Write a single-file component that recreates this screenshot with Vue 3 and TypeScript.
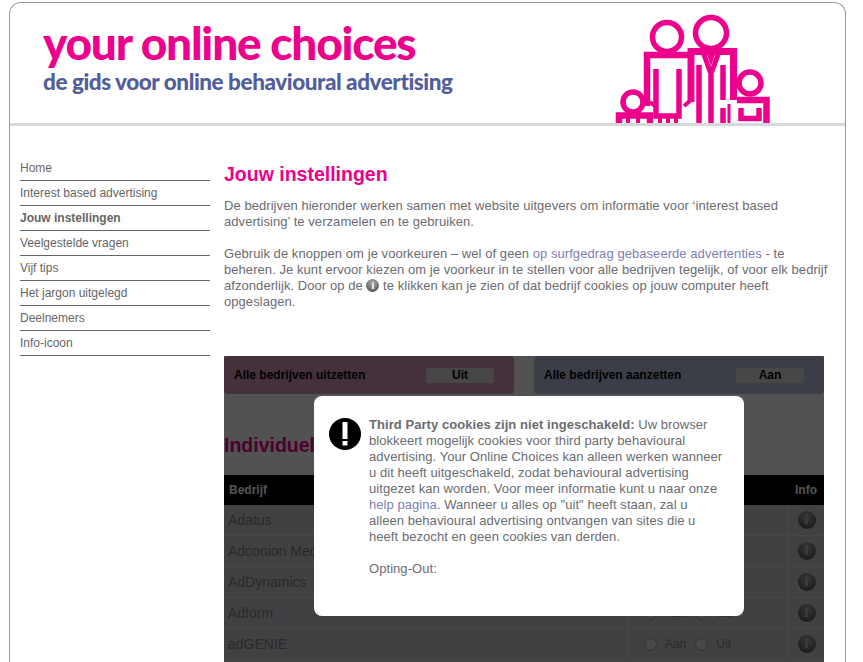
<script setup lang="ts">
interface Row {
  name: string
}

const NAV = [
  'Home',
  'Interest based advertising',
  'Jouw instellingen',
  'Veelgestelde vragen',
  'Vijf tips',
  'Het jargon uitgelegd',
  'Deelnemers',
  'Info-icoon'
]

const ROWS: Row[] = [
  { name: 'Adatus' },
  { name: 'Adconion Media Group' },
  { name: 'AdDynamics' },
  { name: 'Adform' },
  { name: 'adGENIE' }
]
</script>

<template>
  <div class="page">
    <header class="head">
      <div class="brand">
        <div class="brand-main">your online choices</div>
        <div class="brand-sub">de gids voor online behavioural advertising</div>
      </div>
      <!-- viewBox uses page pixels so the shapes can be read straight off the screenshot -->
      <svg class="people" width="180" height="123" viewBox="600 3 180 123" fill="none" stroke="#ec008c" stroke-width="5.5">
        <circle cx="667" cy="37" r="14.5" />
        <circle cx="711" cy="33" r="15.5" />
        <circle cx="750" cy="83" r="11" />
        <circle cx="633" cy="102" r="10" />
        <!-- woman -->
        <path d="M647 106V55H690" stroke-width="6.5" />
        <path d="M656 69V116H679V69" />
        <path d="M650 102L655 106M684 106L690 101M660 116V123M668 116V123M676 116V123" stroke-width="4" />
        <!-- man -->
        <path d="M691 102V51.500H733.500V100" stroke-width="7" />
        <path d="M699 65V123M723 65V100M723 108V123M711 75V123" />
        <path d="M703 52L711 74L719 52" stroke-width="5" />
        <path d="M706 52H716L711 66Z" fill="#ec008c" stroke="none" />
        <path d="M729 104V123" stroke-width="3" />
        <!-- right child -->
        <path d="M737 100H766.500V123" stroke-width="6.500" />
        <path d="M741 108V118.500H759V108" />
        <!-- left child -->
        <path d="M619 123V115.500H650V123" stroke-width="6.500" />
        <path d="M628 118V123M638 118V123" stroke-width="4" />
      </svg>
    </header>

    <div class="body">
      <nav class="nav">
        <a v-for="item in NAV" :key="item" class="nav-item" :class="{ active: item === 'Jouw instellingen' }">{{ item }}</a>
      </nav>

      <main class="main">
        <h1 class="title">Jouw instellingen</h1>
        <p class="para">De bedrijven hieronder werken samen met website uitgevers om informatie voor ‘interest based advertising’ te verzamelen en te gebruiken.</p>
        <p class="para">
          Gebruik de knoppen om je voorkeuren – wel of geen
          <a class="link">op surfgedrag gebaseerde advertenties</a> - te beheren. Je kunt ervoor kiezen om je voorkeur in te stellen voor alle bedrijven tegelijk, of voor elk bedrijf afzonderlijk. Door op de
          <span class="info small"><i>i</i></span>
          te klikken kan je zien of dat bedrijf cookies op jouw computer heeft opgeslagen.
        </p>

        <section class="settings">
          <div class="all-row">
            <div class="all-box off">
              <strong>Alle bedrijven uitzetten</strong>
              <span class="all-btn">Uit</span>
            </div>
            <div class="all-box on">
              <strong>Alle bedrijven aanzetten</strong>
              <span class="all-btn">Aan</span>
            </div>
          </div>

          <h2 class="sub-title">Individuele bedrijven</h2>

          <div class="table">
            <div class="t-head">
              <span class="c-name">Bedrijf</span>
              <span class="c-radio"></span>
              <span class="c-info">Info</span>
            </div>
            <div v-for="row in ROWS" :key="row.name" class="t-row">
              <span class="c-name">{{ row.name }}</span>
              <span class="c-radio">
                <label class="radio-label"><span class="radio"></span>Aan</label>
                <label class="radio-label"><span class="radio"></span>Uit</label>
              </span>
              <span class="c-info"><span class="info"><i>i</i></span></span>
            </div>
          </div>

          <div class="veil"></div>

          <div class="modal">
            <svg class="alert" width="32" height="32" viewBox="0 0 32 32">
              <circle cx="16" cy="16" r="16" fill="#000" />
              <rect x="13.500" y="4" width="5" height="17" fill="#fff" />
              <rect x="13.500" y="23" width="5" height="4.500" fill="#fff" />
            </svg>
            <div class="modal-text">
              <p><b>Third Party cookies zijn niet ingeschakeld:</b> Uw browser blokkeert mogelijk cookies voor third party behavioural advertising. Your Online Choices kan alleen werken wanneer u dit heeft uitgeschakeld, zodat behavioural advertising uitgezet kan worden. Voor meer informatie kunt u naar onze <a class="link">help pagina</a>. Wanneer u alles op "uit" heeft staan, zal u alleen behavioural advertising ontvangen van sites die u heeft bezocht en geen cookies van derden.</p>
              <p>Opting-Out:</p>
            </div>
          </div>
        </section>
      </main>
    </div>
  </div>
</template>

<style scoped>
.page {
  box-sizing: border-box;
  width: 837px;
  height: 660px;
  margin: 2px 0 0 9px;
  border: 1px solid #999;
  border-bottom: 0;
  border-radius: 12px 12px 0 0;
  background: #fff;
  overflow: hidden;
  font-family: "Liberation Sans", Arial, sans-serif;
  font-size: 12px;
  color: #666;
}
.head {
  box-sizing: border-box;
  height: 123px;
  border-bottom: 3px solid #d8d8d8;
  display: flex;
  justify-content: space-between;
  padding: 0 65px 0 33px;
  overflow: hidden;
}
.brand {
  padding-top: 18px;
}
.brand-main {
  font-family: Lato, sans-serif;
  font-weight: 900;
  font-size: 46px;
  line-height: 44px;
  letter-spacing: -1.2px;
  color: #ec008c;
  white-space: nowrap;
}
.brand-sub {
  font-family: Lato, sans-serif;
  font-weight: 900;
  font-size: 22.5px;
  line-height: 24px;
  letter-spacing: -0.45px;
  margin-top: 5px;
  color: #525e9a;
  white-space: nowrap;
}
.people {
  flex: none;
}
.body {
  display: flex;
  padding: 30px 20px 0 10px;
  gap: 14px;
}
.nav {
  width: 190px;
  flex: none;
  display: flex;
  flex-direction: column;
}
.nav-item {
  height: 25px;
  box-sizing: border-box;
  line-height: 25px;
  border-bottom: 1px solid #666;
}
.nav-item.active {
  font-weight: bold;
}
.main {
  flex: 1;
  min-width: 0;
}
.title {
  margin: 6px 0 12px;
  font-size: 19.5px;
  line-height: 24px;
  color: #ec008c;
  font-weight: bold;
}
.para {
  margin: 0 -8px 16px 0;
  line-height: 16px;
  font-size: 13px;
  letter-spacing: 0.06px;
  color: #6b6b70;
}
.link {
  color: #7b7fb5;
}
.info {
  display: inline-block;
  width: 18px;
  height: 18px;
  border-radius: 50%;
  background: radial-gradient(circle at 50% 30%, #aaa, #444);
  text-align: center;
  vertical-align: middle;
}
.info i {
  display: block;
  font: bold 12px/18px "Liberation Serif", serif;
  color: #ccc;
}
.info.small {
  width: 13px;
  height: 13px;
  vertical-align: 1px;
}
.info.small i {
  font-size: 10px;
  line-height: 13px;
  color: #fff;
}
.settings {
  position: relative;
  height: 320px;
  margin-top: 46px;
  width: 600px;
  overflow: hidden;
}
.all-row {
  display: flex;
  gap: 20px;
}
.all-box {
  flex: 1;
  height: 38px;
  border-radius: 4px;
  display: flex;
  align-items: center;
  justify-content: space-between;
  padding: 0 20px 0 10px;
  color: #000;
}
.all-box.off {
  background: #d398b7;
}
.all-box.on {
  background: #b7c2d9;
}
.all-btn {
  width: 68px;
  height: 15px;
  line-height: 15px;
  border-radius: 3px;
  background: #ddd;
  text-align: center;
  font-weight: bold;
  color: #000;
}
.sub-title {
  margin: 38px 0 17px;
  font-size: 19.5px;
  line-height: 26px;
  color: #ec008c;
}
.table {
  font-size: 14px;
  min-height: 210px;
  background: #cacbcf;
}
.t-head,
.t-row {
  display: grid;
  grid-template-columns: 403px 161px 36px;
  align-items: center;
}
.t-head {
  height: 30px;
  background: #000;
  color: #fff;
  font-weight: bold;
  font-size: 12px;
}
.t-head .c-name {
  padding-left: 5px;
}
.t-row {
  height: 31px;
  box-sizing: border-box;
  border-bottom: 1px solid #dadbdf;
  background: #cacbcf;
  color: #808080;
}
.c-name {
  padding-left: 4px;
}
.t-row .c-radio {
  display: flex;
  gap: 9px;
  padding-left: 16px;
  height: 100%;
  align-items: center;
  border-left: 1px solid #dadbdf;
  font-size: 12px;
}
.radio-label {
  display: inline-flex;
  align-items: center;
  gap: 8px;
}
.radio {
  width: 13px;
  height: 13px;
  border-radius: 50%;
  border: 1px solid #999;
  box-sizing: border-box;
  background: #ddd;
}
.c-info {
  text-align: center;
  font-size: 12px;
}
.t-row .c-info {
  display: flex;
  height: 100%;
  align-items: center;
  justify-content: center;
  border-left: 1px solid #dadbdf;
}
.veil {
  position: absolute;
  inset: 0;
  background: rgba(0, 0, 0, 0.68);
}
.modal {
  position: absolute;
  left: 90px;
  top: 40px;
  width: 430px;
  height: 220px;
  box-sizing: border-box;
  padding: 22px 20px 0 15px;
  background: #fff;
  border-radius: 8px;
  display: flex;
  gap: 8px;
  font-size: 13px;
  letter-spacing: 0.06px;
  color: #6b6b70;
}
.alert {
  flex: none;
}
.modal-text {
  flex: 1;
  line-height: 16px;
  margin-top: -1px;
}
.modal-text p {
  margin: 0 0 16px;
}
</style>

<style>
html,
body {
  margin: 0;
  overflow: hidden;
  background: #fff;
}
</style>
